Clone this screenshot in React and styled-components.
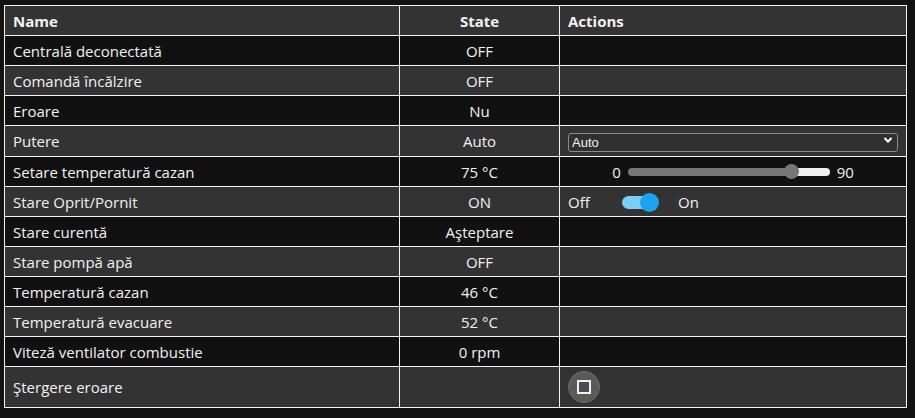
import React, { useState } from "react";
import styled, { createGlobalStyle } from "styled-components";

const GlobalStyle = createGlobalStyle`
  html, body {
    margin: 0;
    padding: 0;
    background: #121212;
  }
  body {
    font-family: "Segoe UI", "Open Sans", "Noto Sans", sans-serif;
    color: #f2f2f2;
  }
`;

const Page = styled.div`
  padding: 5px 0 0 4px;
`;

const Table = styled.table`
  width: 903px;
  border-collapse: collapse;
  border: 1px solid #f4f4f4;
  font-size: 15px;
  table-layout: fixed;
`;

const Row = styled.tr`
  background: ${(p) => (p.$dark ? "#111111" : "#333333")};
`;

const Head = styled.th`
  border: 1px solid #f4f4f4;
  height: 29px;
  padding: 0 8px;
  font-weight: 700;
  text-align: ${(p) => (p.$center ? "center" : "left")};
`;

const Cell = styled.td`
  border: 1px solid #f4f4f4;
  height: ${(p) => p.$h || 29}px;
  padding: 0 8px;
  text-align: ${(p) => (p.$center ? "center" : "left")};
  white-space: nowrap;
`;

const SelectWrap = styled.div`
  position: relative;
  width: 330px;
`;

const Select = styled.select`
  appearance: none;
  width: 100%;
  height: 19px;
  background: #303030;
  color: #f2f2f2;
  border: 1px solid #8a8a8a;
  border-radius: 3px;
  font-family: "Liberation Sans", Arial, sans-serif;
  font-size: 13px;
  padding: 0 3px;
  outline: none;
`;

const Chevron = styled.svg`
  position: absolute;
  right: 5px;
  top: 5px;
  pointer-events: none;
`;

const SliderLine = styled.div`
  display: flex;
  align-items: center;
  justify-content: center;
  gap: 7px;
`;

const Range = styled.input`
  appearance: none;
  -webkit-appearance: none;
  width: 202px;
  height: 8px;
  margin: 0;
  border-radius: 4px;
  outline: none;
  &::-webkit-slider-thumb {
    -webkit-appearance: none;
    width: 15px;
    height: 15px;
    border-radius: 50%;
    background: #777777;
    border: none;
  }
`;

const SwitchLine = styled.div`
  display: flex;
  align-items: center;
`;

const SwitchLabel = styled.span`
  width: ${(p) => p.$w}px;
`;

const Switch = styled.button`
  position: relative;
  width: 38px;
  height: 20px;
  margin-right: 18px;
  padding: 0;
  border: none;
  background: transparent;
  cursor: pointer;
  &::before {
    content: "";
    position: absolute;
    left: 0;
    right: 4px;
    top: 4px;
    height: 13px;
    border-radius: 7px;
    background: #7ccdf6;
  }
  &::after {
    content: "";
    position: absolute;
    top: 1px;
    left: ${(p) => (p.$on ? 18 : 0)}px;
    width: 19px;
    height: 19px;
    border-radius: 50%;
    background: #1ba3ee;
  }
`;

const RoundButton = styled.button`
  width: 32px;
  height: 32px;
  border-radius: 50%;
  border: 1px solid #6c6c6c;
  background: #5a5a5a;
  display: flex;
  align-items: center;
  justify-content: center;
  padding: 0;
  cursor: pointer;
`;

const Square = styled.span`
  width: 10px;
  height: 10px;
  border: 2px solid #f4f2e4;
  background: #4c4c58;
`;

const rows = [
  ["Centrală deconectată", "OFF"],
  ["Comandă încălzire", "OFF"],
  ["Eroare", "Nu"],
  ["Putere", "Auto", "select"],
  ["Setare temperatură cazan", "75 °C", "slider"],
  ["Stare Oprit/Pornit", "ON", "switch"],
  ["Stare curentă", "Aşteptare"],
  ["Stare pompă apă", "OFF"],
  ["Temperatură cazan", "46 °C"],
  ["Temperatură evacuare", "52 °C"],
  ["Viteză ventilator combustie", "0 rpm"],
  ["Ştergere eroare", "", "button"],
];

function Action({ kind }) {
  const [temp, setTemp] = useState(75);
  const [on, setOn] = useState(true);
  if (kind === "select") {
    return (
      <SelectWrap>
        <Select defaultValue="Auto">
          <option>Auto</option>
          <option>Manual</option>
        </Select>
        <Chevron width="10" height="8" viewBox="0 0 10 8">
          <path d="M1.5 2 L5 5.5 L8.5 2" stroke="#fff" strokeWidth="2" fill="none" />
        </Chevron>
      </SelectWrap>
    );
  }
  if (kind === "slider") {
    const pct = (temp / 90) * 100;
    return (
      <SliderLine>
        <span>0</span>
        <Range
          type="range"
          min="0"
          max="90"
          value={temp}
          onChange={(e) => setTemp(+e.target.value)}
          style={{
            background: `linear-gradient(to right, #777 0%, #777 ${pct}%, #efefef ${pct}%, #efefef 100%)`,
          }}
        />
        <span>90</span>
      </SliderLine>
    );
  }
  if (kind === "switch") {
    return (
      <SwitchLine>
        <SwitchLabel $w={54}>Off</SwitchLabel>
        <Switch $on={on} onClick={() => setOn(!on)} />
        <span>On</span>
      </SwitchLine>
    );
  }
  if (kind === "button") {
    return (
      <RoundButton>
        <Square />
      </RoundButton>
    );
  }
  return null;
}

export default function App() {
  return (
    <Page>
      <GlobalStyle />
      <Table>
        <colgroup>
          <col style={{ width: 395 }} />
          <col style={{ width: 160 }} />
          <col />
        </colgroup>
        <thead>
          <Row>
            <Head>Name</Head>
            <Head $center>State</Head>
            <Head>Actions</Head>
          </Row>
        </thead>
        <tbody>
          {rows.map(([name, state, kind], i) => (
            <Row key={name} $dark={i % 2 === 0}>
              <Cell $h={kind === "button" ? 40 : kind === "select" ? 30 : 29}>{name}</Cell>
              <Cell $center>{state}</Cell>
              <Cell>
                <Action kind={kind} />
              </Cell>
            </Row>
          ))}
        </tbody>
      </Table>
    </Page>
  );
}
